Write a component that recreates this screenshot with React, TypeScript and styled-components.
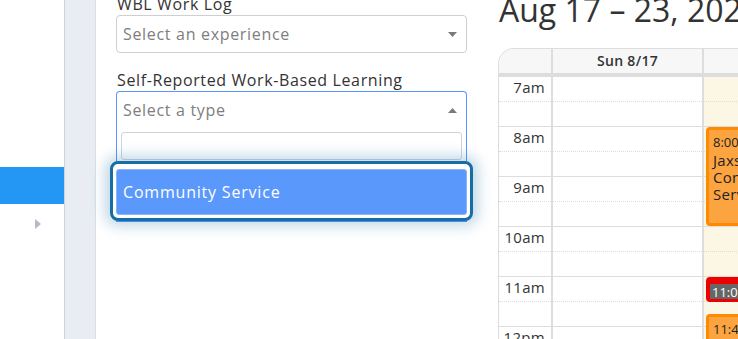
import React from 'react';
import styled, { createGlobalStyle } from 'styled-components';

const Global = createGlobalStyle`
  html, body { margin: 0; padding: 0; background: #fff; }
  body {
    font-family: "Open Sans", "Liberation Sans", sans-serif;
    color: #333;
    overflow: hidden;
  }
  * { box-sizing: border-box; }
`;

const Page = styled.div`
  display: flex;
  width: 738px;
  height: 339px;
  overflow: hidden;
  background: #fff;
`;

const Sidebar = styled.nav`
  flex: none;
  width: 65px;
  border-right: 1px solid #c9d4e0;
  padding-top: 167px;
  display: flex;
  flex-direction: column;
`;

const NavItem = styled.div<{ $active?: boolean }>`
  height: ${(p) => (p.$active ? '37px' : '40px')};
  background: ${(p) => (p.$active ? '#2397f3' : 'transparent')};
  display: flex;
  align-items: center;
  justify-content: flex-end;
  padding-right: 23px;
`;

const Strip = styled.div`
  flex: none;
  width: 31px;
  background: #e9edf3;
  border-right: 1px solid #d9dfe7;
`;

const FormPanel = styled.section`
  flex: none;
  width: 384px;
  padding: 0 13px 0 20px;
  margin-top: -7px;
`;

const Label = styled.div<{ $gap?: number }>`
  font-size: 16px;
  line-height: 22px;
  color: #333;
  margin-top: ${(p) => p.$gap ?? 0}px;
  padding-left: 1px;
  letter-spacing: 0.62px;
  white-space: nowrap;
`;

const SelectWrap = styled.div`
  position: relative;
`;

const SelectBox = styled.div<{ $open?: boolean }>`
  height: ${(p) => (p.$open ? '37px' : '38px')};
  border: 1px solid ${(p) => (p.$open ? '#5897fb' : '#cfcfcf')};
  border-bottom: ${(p) => (p.$open ? 'none' : '1px solid #cfcfcf')};
  border-radius: ${(p) => (p.$open ? '4px 4px 0 0' : '4px')};
  display: flex;
  align-items: center;
  justify-content: space-between;
  padding: 0 9px 0 6px;
  background: #fff;
`;

const Placeholder = styled.span`
  font-size: 16px;
  line-height: 36px;
  color: #7e7e7e;
  letter-spacing: 0.68px;
`;

const Dropdown = styled.div`
  position: absolute;
  top: 100%;
  left: 0;
  right: 0;
  background: #fff;
  border: 1px solid #5897fb;
  border-top: none;
  padding: 4px 4px 0;
  z-index: 2;
`;

const SearchField = styled.div`
  height: 28px;
  border: 1px solid #cfd4dc;
  border-radius: 3px;
  background: #fff;
`;

const FocusRing = styled.div`
  margin: 1px -11px 0;
  border: 3px solid #176ea6;
  border-radius: 8px;
  background: #fff;
  padding: 5px 3px 3px;
  box-shadow: 0 0 14px 5px rgba(30, 110, 170, 0.28);
  position: relative;
`;

const Option = styled.div`
  height: 46px;
  border-radius: 3px;
  background: #5b98fc;
  border: 1px solid #86b4fd;
  color: #fff;
  font-size: 16px;
  line-height: 44px;
  padding-left: 6px;
  letter-spacing: 0.8px;
`;

const CalendarPanel = styled.section`
  flex: 1;
  min-width: 0;
  padding-left: 18px;
  overflow: hidden;
`;

const Title = styled.h1`
  margin: -10px 0 0;
  padding-left: 1px;
  font-size: 32px;
  line-height: 40px;
  font-weight: 400;
  color: #333;
  white-space: nowrap;
  letter-spacing: 0;
`;

const Calendar = styled.div`
  margin-top: 18px;
  width: 400px;
  border-left: 1px solid #ddd;
  border-top: 1px solid #ddd;
  border-top-left-radius: 16px;
  overflow: hidden;
`;

const HeadRow = styled.div`
  display: flex;
  height: 28px;
  border-bottom: 4px solid #ddd;
  background: #f7f7f7;
`;

const HeadCell = styled.div<{ $w: number }>`
  flex: none;
  width: ${(p) => p.$w}px;
  border-right: 2px solid #ddd;
  font-size: 14px;
  font-weight: 600;
  line-height: 24px;
  text-align: center;
  color: #333;
  letter-spacing: 0.3px;
`;

const Body = styled.div`
  display: flex;
`;

const Column = styled.div<{ $w: number; $today?: boolean }>`
  flex: none;
  position: relative;
  width: ${(p) => p.$w}px;
  border-right: 2px solid #ddd;
  background: ${(p) => (p.$today ? '#fcf7e5' : '#fff')};
`;

const HalfSlot = styled.div<{ $major?: boolean }>`
  height: 25px;
  border-bottom: 1px ${(p) => (p.$major ? 'solid' : 'dotted')} #ddd;
  font-size: 15px;
  line-height: 20px;
  text-align: right;
  padding-right: 6px;
  color: #333;
  letter-spacing: 0.3px;
`;

const Event = styled.div<{ $top: number; $h: number; $color: string; $fill: string }>`
  position: absolute;
  left: 2px;
  width: 140px;
  top: ${(p) => p.$top}px;
  height: ${(p) => p.$h}px;
  border: 3px solid ${(p) => p.$color};
  background: ${(p) => p.$fill};
  border-radius: 4px;
  padding: 0 4px;
  color: #222;
  overflow: hidden;
`;

const EventTime = styled.div<{ $dark?: boolean }>`
  font-size: 13px;
  line-height: 17px;
  display: inline-block;
  color: ${(p) => (p.$dark ? '#fff' : '#222')};
  background: ${(p) => (p.$dark ? '#666' : 'transparent')};
  padding: 0 ${(p) => (p.$dark ? '2px' : '0')};
  margin-left: ${(p) => (p.$dark ? '-3px' : '0')};
  margin-top: ${(p) => (p.$dark ? '1px' : '0')};
`;

const EventText = styled.div`
  font-size: 15px;
  line-height: 17px;
  letter-spacing: 0.3px;
`;

const Tri = ({ dir }: { dir: 'down' | 'up' | 'right' }) => {
  if (dir === 'right')
    return (
      <svg width="6" height="10" viewBox="0 0 6 10">
        <polygon points="0,0 6,5 0,10" fill="#b3bcc8" />
      </svg>
    );
  return (
    <svg width="9" height="5" viewBox="0 0 9 5">
      <polygon points={dir === 'down' ? '0,0 9,0 4.5,5' : '0,5 9,5 4.5,0'} fill="#7a7a7a" />
    </svg>
  );
};

const hours = ['7am', '8am', '9am', '10am', '11am', '12pm'];

const Slots = ({ labels }: { labels?: boolean }) => (
  <>
    {hours.map((h) => (
      <React.Fragment key={h}>
        <HalfSlot>{labels ? h : ''}</HalfSlot>
        <HalfSlot $major />
      </React.Fragment>
    ))}
  </>
);

export default function App() {
  return (
    <Page>
      <Global />
      <Sidebar>
        <NavItem $active />
        <NavItem>
          <Tri dir="right" />
        </NavItem>
      </Sidebar>
      <Strip />
      <FormPanel>
        <Label>WBL Work Log</Label>
        <SelectBox>
          <Placeholder>Select an experience</Placeholder>
          <Tri dir="down" />
        </SelectBox>
        <Label $gap={16}>Self-Reported Work-Based Learning</Label>
        <SelectWrap>
          <SelectBox $open>
            <Placeholder>Select a type</Placeholder>
            <Tri dir="up" />
          </SelectBox>
          <Dropdown>
            <SearchField />
            <FocusRing>
              <Option>Community Service</Option>
            </FocusRing>
          </Dropdown>
        </SelectWrap>
      </FormPanel>
      <CalendarPanel>
        <Title>Aug 17 – 23, 2025</Title>
        <Calendar>
          <HeadRow>
            <HeadCell $w={54} />
            <HeadCell $w={151}>Sun 8/17</HeadCell>
            <HeadCell $w={151}>Mon 8/18</HeadCell>
          </HeadRow>
          <Body>
            <Column $w={54}>
              <Slots labels />
            </Column>
            <Column $w={151}>
              <Slots />
            </Column>
            <Column $w={151} $today>
              <Slots />
              <Event $top={50} $h={99} $color="#ff8a00" $fill="#fca540">
                <EventTime>8:00 - 10:00</EventTime>
                <EventText>Jaxson</EventText>
                <EventText>Community</EventText>
                <EventText>Service</EventText>
              </Event>
              <Event $top={200} $h={25} $color="#ee0000" $fill="#ee0000">
                <EventTime $dark>11:00 - 11:30</EventTime>
              </Event>
              <Event $top={237} $h={80} $color="#ff8a00" $fill="#fca540">
                <EventTime>11:45 - 1:00</EventTime>
                <EventText>Jaxson</EventText>
              </Event>
            </Column>
          </Body>
        </Calendar>
      </CalendarPanel>
    </Page>
  );
}
